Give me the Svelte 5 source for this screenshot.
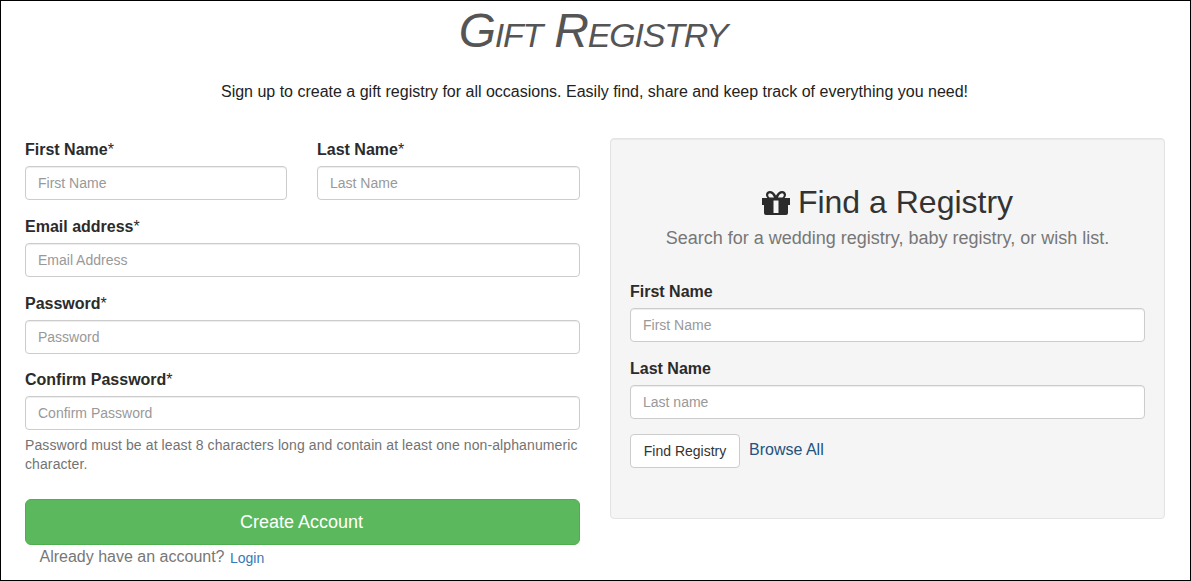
<script>
  const nameFields = [
    { label: 'First Name', ph: 'First Name' },
    { label: 'Last Name', ph: 'Last Name' }
  ];
  const fields = [
    { label: 'Email address', ph: 'Email Address' },
    { label: 'Password', ph: 'Password' }
  ];
</script>

<div class="page">
  <header class="head">
    <div class="logo">Gift Registry</div>
    <p class="lead">Sign up to create a gift registry for all occasions. Easily find, share and keep track of everything you need!</p>
  </header>

  <main class="cols">
    <section class="col">
      <div class="names">
        {#each nameFields as f}
          <div class="group">
            <label>{f.label}<span class="req">*</span></label>
            <input placeholder={f.ph} />
          </div>
        {/each}
      </div>
      {#each fields as f}
        <div class="group">
          <label>{f.label}<span class="req">*</span></label>
          <input placeholder={f.ph} />
        </div>
      {/each}
      <div class="group confirm">
        <label class="tight">Confirm Password<span class="req">*</span></label>
        <input placeholder="Confirm Password" />
        <p class="help">Password must be at least 8 characters long and contain at least one non-alphanumeric character.</p>
      </div>
      <button class="create">Create Account</button>
      <p class="already">Already have an account? <a href="#login">Login</a></p>
    </section>

    <section class="col well">
      <h2>
        <svg class="gift" viewBox="0 0 28 24" aria-hidden="true">
          <path fill-rule="evenodd" d="M8 0C5.6 0 4 1.7 4 3.6C4 5 4.6 6.2 5.4 7H0V14H2V22Q2 24 4 24H24Q26 24 26 22V14H28V7H22.6C23.4 6.2 24 5 24 3.6C24 1.7 22.4 0 20 0C17.6 0 15.4 2 14 4.4C12.6 2 10.4 0 8 0ZM8 2.2C9.6 2.2 11.2 4.4 12 6.6H8.6C7 6.6 6.2 5.2 6.2 4.2C6.2 3 7 2.2 8 2.2ZM20 2.2C21 2.2 21.8 3 21.8 4.2C21.8 5.2 21 6.6 19.4 6.6H16C16.8 4.4 18.4 2.2 20 2.2ZM11.5 9.5H16.5V22H11.5Z"/>
        </svg>
        Find a Registry
      </h2>
      <p class="sub">Search for a wedding registry, baby registry, or wish list.</p>
      <div class="group"><label>First Name</label><input placeholder="First Name" /></div>
      <div class="group"><label>Last Name</label><input placeholder="Last name" /></div>
      <div class="actions">
        <button class="find">Find Registry</button>
        <a class="browse" href="#browse">Browse All</a>
      </div>
    </section>
  </main>
</div>

<style>
  :global(body) {
    margin: 0;
    font-family: "Liberation Sans", Arial, sans-serif;
    font-size: 14px;
    line-height: 1.42857;
    color: #333;
    background: #fff;
  }
  .page {
    box-sizing: border-box;
    height: 581px;
    border: 1px solid #000;
    overflow: hidden;
  }
  .head {
    height: 137px;
    text-align: center;
  }
  .logo {
    height: 62px;
    margin-right: 5px;
    font-family: "Liberation Sans", sans-serif;
    font-style: italic;
    font-variant: small-caps;
    font-size: 48px;
    line-height: 60px;
    letter-spacing: -1.2px;
    color: #555;
    white-space: nowrap;
  }
  .lead {
    margin: 17px 2px 0 0;
    font-size: 16px;
    line-height: 23px;
    color: #222;
  }
  .cols {
    display: grid;
    grid-template-columns: 555px 555px;
    gap: 30px;
    padding: 0 25px 0 24px;
    align-items: start;
  }
  .names {
    display: grid;
    grid-template-columns: 262px 263px;
    gap: 30px;
  }
  .group {
    margin-bottom: 15px;
  }
  label {
    display: block;
    margin-bottom: 4px;
    padding-top: 1px;
    font-size: 16px;
    font-weight: 700;
    color: #2b2b2b;
  }
  label.tight {
    margin-bottom: 5px;
    padding-top: 0;
  }
  .req {
    font-weight: 400;
  }
  input {
    display: block;
    box-sizing: border-box;
    width: 100%;
    height: 34px;
    padding: 6px 12px;
    font: 14px/1.42857 "Liberation Sans", Arial, sans-serif;
    color: #555;
    background: #fff;
    border: 1px solid #ccc;
    border-radius: 4px;
    box-shadow: inset 0 1px 1px rgba(0, 0, 0, 0.075);
  }
  input::placeholder {
    color: #999;
    opacity: 1;
  }
  .confirm {
    margin-bottom: 25px;
  }
  .help {
    margin: 6px 0 0;
    font-size: 14px;
    line-height: 19px;
    letter-spacing: 0.1px;
    color: #737373;
  }
  .create {
    display: block;
    box-sizing: border-box;
    width: 100%;
    height: 46px;
    padding: 2px 16px 0 14px;
    font: 18px/1.33 "Liberation Sans", Arial, sans-serif;
    color: #fff;
    background: #5cb85c;
    border: 1px solid #4cae4c;
    border-radius: 6px;
  }
  .already {
    margin: 0;
    padding: 0 0 0 14.5px;
    font-size: 16px;
    line-height: 23px;
    color: #777;
  }
  .already a {
    margin-left: 1px;
    font-size: 14px;
    vertical-align: -1px;
    color: #337ab7;
    text-decoration: none;
  }
  .well {
    box-sizing: border-box;
    height: 381px;
    padding: 19px;
    background: #f5f5f5;
    border: 1px solid #e3e3e3;
    border-radius: 4px;
    box-shadow: inset 0 1px 1px rgba(0, 0, 0, 0.05);
  }
  h2 {
    margin: 27px 0 0;
    display: flex;
    justify-content: center;
    align-items: center;
    gap: 8px;
    font-size: 32px;
    font-weight: 400;
    line-height: 35px;
    color: #333;
  }
  .gift {
    width: 28px;
    height: 24px;
    fill: #2b2b2b;
    flex: none;
  }
  .sub {
    margin: 5px 0 29px;
    text-align: center;
    font-size: 18px;
    line-height: 26px;
    color: #777;
  }
  .actions {
    display: flex;
    align-items: flex-start;
    gap: 9px;
  }
  .find {
    box-sizing: border-box;
    width: 110px;
    height: 34px;
    padding: 2px 12px 0;
    font: 14px/1.42857 "Liberation Sans", Arial, sans-serif;
    color: #333;
    background: #fff;
    border: 1px solid #ccc;
    border-radius: 4px;
  }
  .browse {
    font-size: 16px;
    line-height: 23px;
    margin-top: 4px;
    color: #23527c;
    text-decoration: none;
  }
</style>
